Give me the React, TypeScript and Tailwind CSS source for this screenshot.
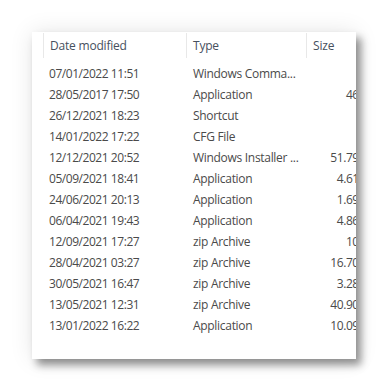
import React from "react";

type Row = {
    date: string;
    type: string;
    size: string;
};

const rows: Row[] = [
    { date: "07/01/2022 11:51", type: "Windows Comma...", size: "" },
    { date: "28/05/2017 17:50", type: "Application", size: "465 KB" },
    { date: "26/12/2021 18:23", type: "Shortcut", size: "" },
    { date: "14/01/2022 17:22", type: "CFG File", size: "" },
    { date: "12/12/2021 20:52", type: "Windows Installer ...", size: "51.792 KB" },
    { date: "05/09/2021 18:41", type: "Application", size: "4.610 KB" },
    { date: "24/06/2021 20:13", type: "Application", size: "1.694 KB" },
    { date: "06/04/2021 19:43", type: "Application", size: "4.861 KB" },
    { date: "12/09/2021 17:27", type: "zip Archive", size: "102 KB" },
    { date: "28/04/2021 03:27", type: "zip Archive", size: "16.703 KB" },
    { date: "30/05/2021 16:47", type: "zip Archive", size: "3.285 KB" },
    { date: "13/05/2021 12:31", type: "zip Archive", size: "40.902 KB" },
    { date: "13/01/2022 16:22", type: "Application", size: "10.096 KB" },
];

const App: React.FC = () => {
    return (
        <div
            className="w-[388px] h-[391px] bg-white pt-[32px] pl-[32px]"
            style={{ fontFamily: '"Open Sans", "Noto Sans", sans-serif' }}
        >
            <div className="w-[324px] h-[327px] bg-white overflow-hidden shadow-[5px_6px_8px_rgba(0,0,0,0.42),0_0_22px_rgba(0,0,0,0.10)]">
                <div className="w-[400px]">
                    {/* header */}
                    <div className="flex h-[26px] text-[12px] text-[#46505e] tracking-[-0.2px]">
                        <div className="w-[11px]" />
                        <div className="w-[143px] flex items-center pl-[6px] border-l border-[#e8e8e8] mt-[1px]">
                            Date modified
                        </div>
                        <div className="w-[120px] flex items-center pl-[6px] border-l border-[#e8e8e8] mt-[1px]">
                            Type
                        </div>
                        <div className="w-[82px] flex items-center pl-[6px] border-l border-[#e8e8e8] mt-[1px]">
                            Size
                        </div>
                    </div>

                    {/* rows */}
                    <div className="pt-[5px]">
                        {rows.map((row) => (
                            <div
                                key={row.date}
                                className="flex h-[21px] items-center text-[12px] text-[#4a4a4a] tracking-[-0.3px]"
                            >
                                <div className="w-[17px]" />
                                <div className="w-[144px] whitespace-nowrap tracking-[-0.45px]">
                                    {row.date}
                                </div>
                                <div className="w-[120px] whitespace-nowrap">
                                    {row.type}
                                </div>
                                <div className="w-[83px] text-right whitespace-nowrap pr-[14px] tracking-[-0.45px]">
                                    {row.size}
                                </div>
                            </div>
                        ))}
                    </div>
                </div>
            </div>
        </div>
    );
};

export default App;
